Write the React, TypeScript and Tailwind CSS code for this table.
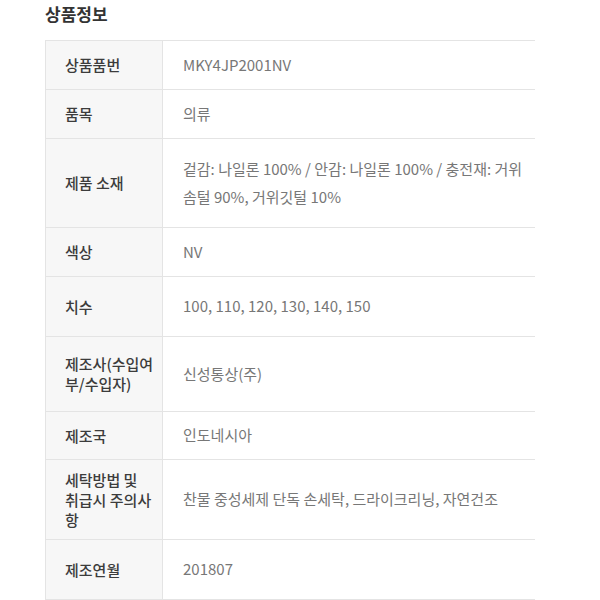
const font = {
  fontFamily: '"Noto Sans CJK KR", "Noto Sans", sans-serif',
};

type Row = { label: React.ReactNode; value: React.ReactNode; h: string; lh?: string };

const rows: Row[] = [
  { label: "상품품번", value: "MKY4JP2001NV", h: "h-[49px]" },
  { label: "품목", value: "의류", h: "h-[49px]" },
  {
    label: "제품 소재",
    value: (
      <div className="leading-[28px]">
        <div className="whitespace-nowrap">겉감: 나일론 100% / 안감: 나일론 100% / 충전재: 거위</div>
        <div className="whitespace-nowrap">솜털 90%, 거위깃털 10%</div>
      </div>
    ),
    h: "h-[89px]",
  },
  { label: "색상", value: "NV", h: "h-[49px]" },
  { label: "치수", value: "100, 110, 120, 130, 140, 150", h: "h-[60px]" },
  {
    label: (
      <>
        제조사(수입여
        <br />
        부/수입자)
      </>
    ),
    value: "신성통상(주)",
    h: "h-[75px]",
    lh: "leading-[20px]",
  },
  { label: "제조국", value: "인도네시아", h: "h-[48px]" },
  {
    label: (
      <>
        세탁방법 및
        <br />
        취급시 주의사
        <br />항
      </>
    ),
    value: "찬물 중성세제 단독 손세탁, 드라이크리닝, 자연건조",
    h: "h-[80px]",
    lh: "leading-[20px]",
  },
  { label: "제조연월", value: "201807", h: "h-[60px]" },
];

export default function App() {
  return (
    <div className="h-[600px] w-[600px] overflow-hidden bg-white" style={font}>
      <div className="pl-[45px] pt-[3px]">
        <h2 className="text-[17px] font-bold leading-[22px] text-[#333]">상품정보</h2>

        <div className="mt-[15px] w-[490px] overflow-hidden border-t border-l border-[#e4e4e4]">
          {rows.map((r, i) => (
            <div
              key={i}
              className={`grid grid-cols-[117px_1fr] border-b border-[#e4e4e4] ${r.h}`}
            >
              <div className="flex items-center border-r border-[#e4e4e4] bg-[#f7f7f7] pl-[19px]">
                <span
                  className={`whitespace-nowrap text-[15px] font-medium text-[#3c3c3c] ${
                    r.lh ?? "leading-[22px]"
                  }`}
                >
                  {r.label}
                </span>
              </div>
              <div className="flex items-center whitespace-nowrap pl-[20px] text-[15px] text-[#777]">
                {r.value}
              </div>
            </div>
          ))}
        </div>
      </div>
    </div>
  );
}
